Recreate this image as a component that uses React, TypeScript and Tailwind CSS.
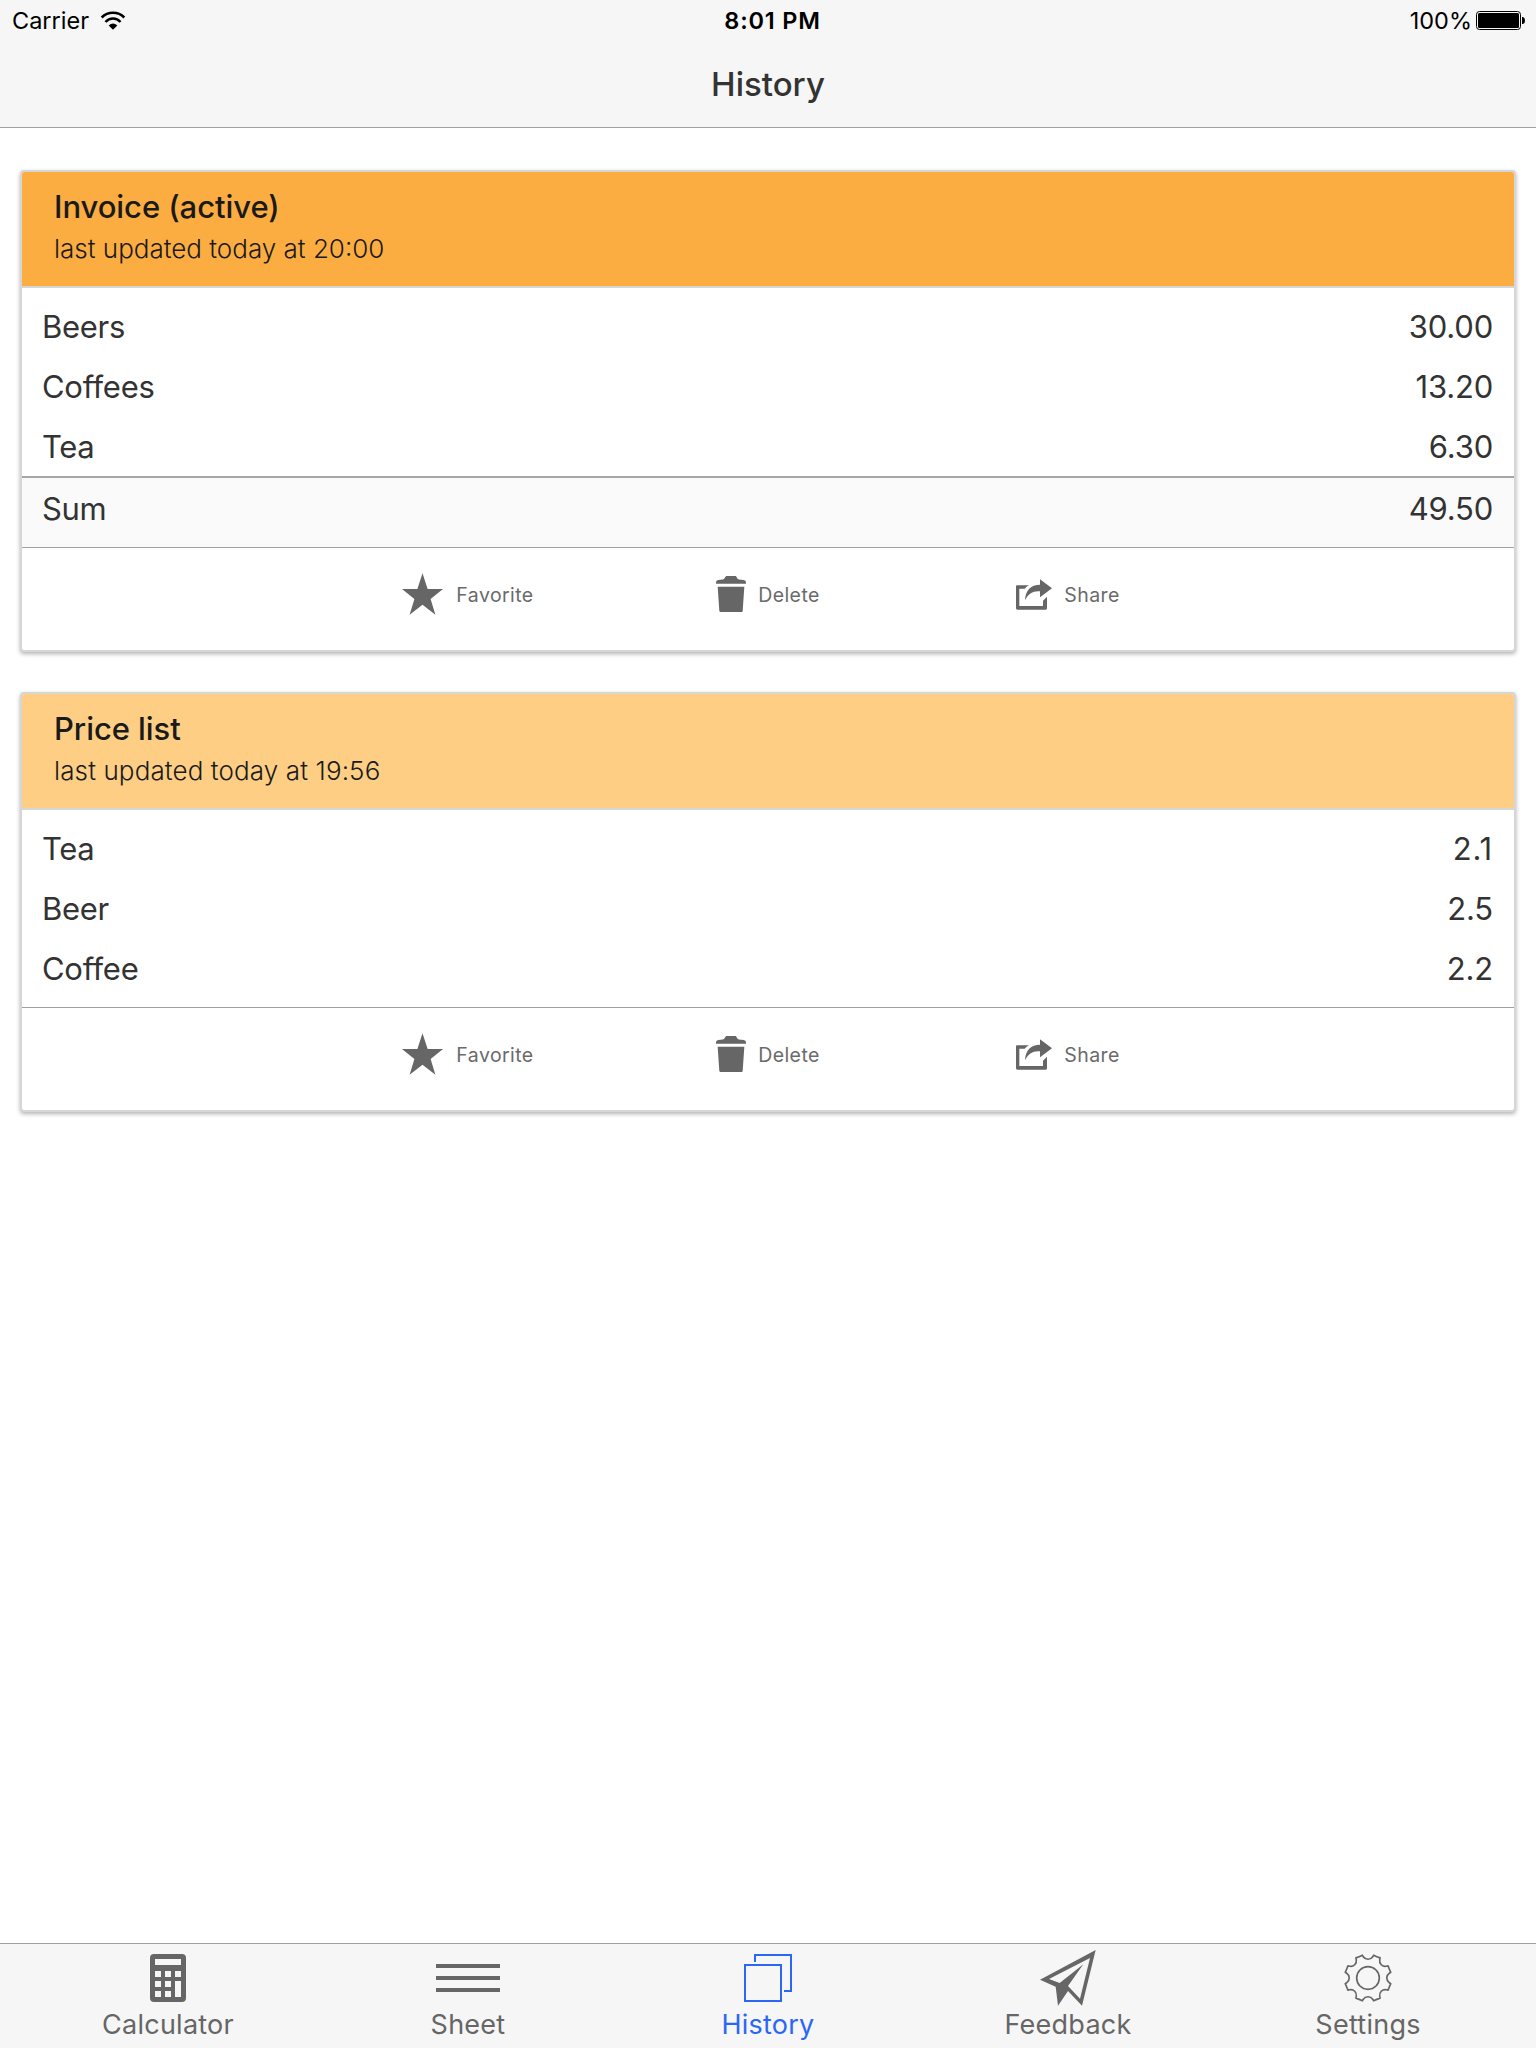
import type { ReactNode } from "react";

type Row = { label: string; value: string; valueClass?: string };

function WifiIcon() {
  return (
    <svg className="h-[19px] w-[26px]" viewBox="299 31 78 57" fill="none">
      <path d="M304 50.5A48 48 0 0 1 372 50.5" stroke="#000" strokeWidth="7.500" />
      <path d="M315.5 64A30 30 0 0 1 360.500 64" stroke="#000" strokeWidth="7.500" />
      <path d="M325 74.500Q338 63 351 74.500L338 87Z" fill="#000" />
    </svg>
  );
}

function BatteryIcon() {
  return (
    <svg className="h-[19px] w-[49px]" viewBox="0 0 49 19">
      <rect x="0.500" y="0.500" width="44" height="18" rx="3" fill="none" stroke="#000" />
      <rect x="2" y="2" width="41" height="15" rx="1.500" fill="#000" />
      <path d="M46 6h1q2 0.500 2 3.500t-2 3.500h-1z" fill="#000" />
    </svg>
  );
}

function StarIcon() {
  return (
    <svg className="relative -top-px h-[42px] w-[41px]" viewBox="67 99 124 126" fill="#666">
      <path d="M129 99L144.500 147H191L153.500 177L168 225L129 194.500L90 225L104.500 177L67 147H113.500Z" />
    </svg>
  );
}

function TrashIcon() {
  return (
    <svg className="relative -top-px h-9 w-[30px]" viewBox="1005 108 90 108" fill="#666">
      <path d="M1036 108H1064Q1067 109 1068 114Q1070 118 1074 118.500L1088 120Q1095 121 1095 127V131H1005V127Q1005 121 1012 120L1025 118.500Q1030 118 1031 114Q1033 109 1036 108Z" />
      <path d="M1010 140H1090L1085 213Q1085 216 1082 216H1019Q1016 216 1015 213Z" />
    </svg>
  );
}

function ShareIcon() {
  return (
    <svg className="relative -top-px h-[31px] w-9" viewBox="708 116 108 93" fill="#666">
      <path d="M711 135H747Q739 139 734 145H718V197H789V181L801 169V204Q801 208 797 208H712Q708 208 708 204V138Q708 135 711 135Z" />
      <path d="M780 117L816 144L780 171V153C760 151 745 159 735 180C736 150 753 133 780 133Z" />
    </svg>
  );
}

function CalculatorIcon() {
  return (
    <svg className="h-12 w-9" viewBox="0 0 36 48" fill="#666">
      <path
        fillRule="evenodd"
        d="M4 0H32Q36 0 36 4V44Q36 48 32 48H4Q0 48 0 44V4Q0 0 4 0ZM5 5V11H31V5ZM5 17V23H11V17ZM15 17V23H21V17ZM25 17V23H31V17ZM5 27V33H11V27ZM15 27V33H21V27ZM25 27V43H31V27ZM5 37V43H11V37ZM15 37V43H21V37Z"
      />
    </svg>
  );
}

function SheetIcon() {
  return (
    <svg className="h-7 w-16" viewBox="0 0 64 28" fill="#666">
      <path d="M0 0H64V4H0ZM0 12H64V16H0ZM0 24H64V28H0Z" />
    </svg>
  );
}

function BrowsersIcon() {
  return (
    <svg className="size-12" viewBox="0 0 48 48" fill="none" stroke="#2b67f6" strokeWidth="2">
      <path d="M1 11H37V47H1Z" />
      <path d="M11 8V1H47V37H40" />
    </svg>
  );
}

function PlaneIcon() {
  return (
    <svg className="size-14 shrink-0" viewBox="1021 60 168 168" fill="#666">
      <path
        fillRule="evenodd"
        d="M1188 60L1147 227L1105 183L1075 227L1068 170L1021 149ZM1048 147L1080 159L1151 103L1105 168L1141 206L1171 84Z"
      />
    </svg>
  );
}

// Eight shallow notches cut into a circle, joined by short rim arcs.
const gearPath =
  Array.from({ length: 8 }, (_, i) => {
    const at = (deg: number, r: number) => {
      const a = ((i * 45 + deg - 90) * Math.PI) / 180;
      return `${(72 + r * Math.cos(a)).toFixed(2)} ${(72 + r * Math.sin(a)).toFixed(2)}`;
    };
    return `${i === 0 ? "M" : "L"}${at(-14, 70.5)}L${at(-12.5, 65.5)}A17 17 0 0 0 ${at(12.5, 65.5)}L${at(14, 70.5)}Q${at(22.5, 69)} ${at(31, 70.5)}`;
  }).join("") + "Z";

function GearIcon() {
  return (
    <svg className="size-12" viewBox="0 0 144 144" fill="none" stroke="#666" strokeWidth="5" strokeLinejoin="round">
      <path d={gearPath} />
      <circle cx="72" cy="72" r="34" />
    </svg>
  );
}

function Action({ icon, label, gap }: { icon: ReactNode; label: string; gap: string }) {
  return (
    <button className={`flex w-[300px] items-center justify-center ${gap}`}>
      {icon}
      <span className="text-[19.5px] leading-6 tracking-[0.42px] text-[#6a6a6a]">{label}</span>
    </button>
  );
}

function LineItem({ label, value, valueClass = "tracking-[-0.2px]" }: Row) {
  return (
    <div className="flex h-[60px] shrink-0 items-center justify-between pr-[21px] pl-5 text-[31px] leading-10 text-[#333]">
      <span className="tracking-[-0.3px]">{label}</span>
      <span className={valueClass}>{value}</span>
    </div>
  );
}

type CardProps = {
  title: string;
  updated: string;
  headerClass: string;
  updatedClass: string;
  bodyClass: string;
  rows: Row[];
  sum?: string;
};

function Card({ title, updated, headerClass, updatedClass, bodyClass, rows, sum }: CardProps) {
  return (
    <section className="overflow-hidden rounded-[4px] border-2 border-[#d6d6d6] bg-white shadow-[0_2px_4px_rgba(0,0,0,0.3)]">
      <header className={`h-[116px] border-b-2 border-[#d6d6d6] px-8 pt-[15px] text-[#1a1a1a] ${headerClass}`}>
        <h2 className="text-[31px] leading-10 font-medium tracking-[-0.06px]">{title}</h2>
        <p className={`mt-[6px] text-[26px] leading-8 font-light ${updatedClass}`}>{updated}</p>
      </header>
      <div className={`flex flex-col pt-[9px] ${bodyClass}`}>
        {rows.map((r) => (
          <LineItem key={r.label} {...r} />
        ))}
      </div>
      {sum && (
        <div className="h-[71px] border-t-2 border-[#a6a6a6] bg-[#fafafa] pt-px">
          <LineItem label="Sum" value={sum} />
        </div>
      )}
      <footer className="h-[103px] border-t border-[#a0a0a0]">
        <div className="flex h-[94px] justify-center">
          <Action icon={<StarIcon />} label="Favorite" gap="gap-[13px]" />
          <Action icon={<TrashIcon />} label="Delete" gap="gap-[12px]" />
          <Action icon={<ShareIcon />} label="Share" gap="gap-3" />
        </div>
      </footer>
    </section>
  );
}

const tabs = [
  { label: "Calculator", icon: <CalculatorIcon />, color: "text-[#666]" },
  { label: "Sheet", icon: <SheetIcon />, color: "text-[#666]" },
  { label: "History", icon: <BrowsersIcon />, color: "text-[#2b67f6]" },
  { label: "Feedback", icon: <PlaneIcon />, color: "text-[#666]" },
  { label: "Settings", icon: <GearIcon />, color: "text-[#666]" },
];

export default function App() {
  return (
    <div className="flex h-[2048px] w-[1536px] flex-col overflow-hidden bg-white font-[Inter,sans-serif]">
      <header className="h-32 shrink-0 border-b border-[#a0a0a0] bg-[#f6f6f6]">
        <div className="grid h-[41px] grid-cols-3 items-center text-[23.5px] leading-10 text-black">
          <div className="flex items-center gap-[11px] pl-3">
            <span>Carrier</span>
            <WifiIcon />
          </div>
          <div className="pl-[9px] text-center font-semibold tracking-[0.8px]">8:01 PM</div>
          <div className="flex items-center justify-end gap-1 pr-[11px]">
            <span>100%</span>
            <BatteryIcon />
          </div>
        </div>
        <h1 className="pt-[23px] text-center text-[33px] leading-10 font-medium text-[#333]">History</h1>
      </header>

      <main className="flex flex-1 flex-col gap-10 px-5 pt-[42px]">
        <Card
          title="Invoice (active)"
          updated="last updated today at 20:00"
          headerClass="bg-[#fcad42]"
          updatedClass="tracking-normal"
          bodyClass="h-[188px]"
          rows={[
            { label: "Beers", value: "30.00" },
            { label: "Coffees", value: "13.20" },
            { label: "Tea", value: "6.30" },
          ]}
          sum="49.50"
        />
        <Card
          title="Price list"
          updated="last updated today at 19:56"
          headerClass="bg-[#fdce84]"
          updatedClass="tracking-[0.12px]"
          bodyClass="h-[197px]"
          rows={[
            { label: "Tea", value: "2.1", valueClass: "tracking-[0.8px]" },
            { label: "Beer", value: "2.5" },
            { label: "Coffee", value: "2.2" },
          ]}
        />
      </main>

      <nav className="flex h-[105px] shrink-0 justify-center border-t border-[#a0a0a0] bg-[#f6f6f6]">
        {tabs.map((t) => (
          <a key={t.label} className={`flex w-[300px] flex-col items-center pt-[10px] ${t.color}`}>
            <span className="flex h-12 items-center">{t.icon}</span>
            <span className="mt-[5px] text-[27px] leading-9 tracking-[0.25px]">{t.label}</span>
          </a>
        ))}
      </nav>
    </div>
  );
}
